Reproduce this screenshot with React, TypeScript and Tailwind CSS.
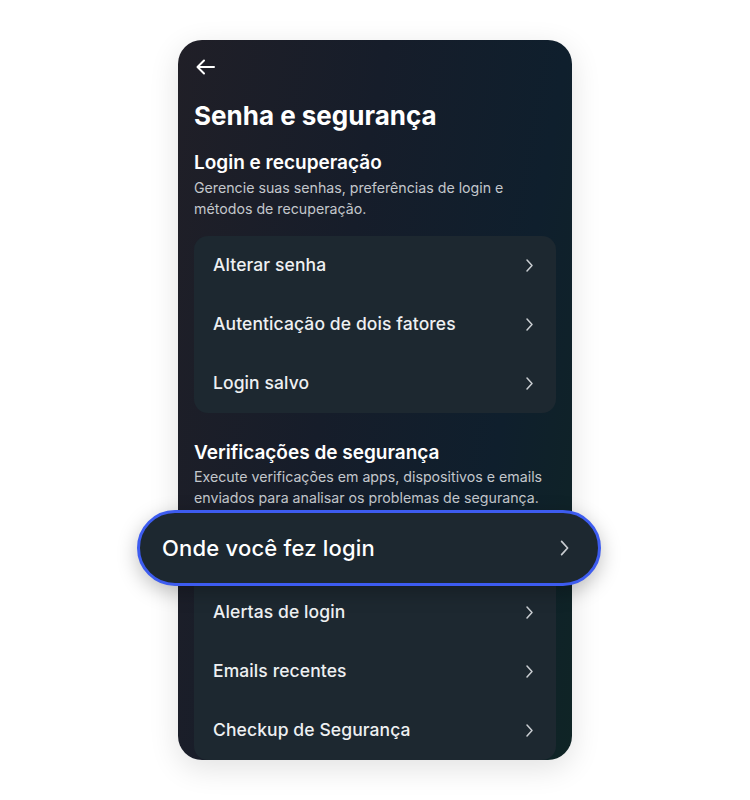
import React from "react";

const Chevron = ({ big = false }: { big?: boolean }) => (
  <svg
    width={big ? 12 : 10}
    height={big ? 18 : 15}
    viewBox="0 0 10 15"
    fill="none"
    stroke="#c9cdd1"
    strokeWidth={big ? 1.4 : 1.5}
    strokeLinecap="round"
    strokeLinejoin="round"
  >
    <path d="M3 2 L8 7.5 L3 13" />
  </svg>
);

const Row = ({ label }: { label: string }) => (
  <div className="flex h-[59px] items-center justify-between pl-[19px] pr-[22px]">
    <span className="text-[17.5px] font-medium tracking-[0.1px] text-[#eef0f2]">{label}</span>
    <Chevron />
  </div>
);

export default function App() {
  return (
    <div
      className="flex min-h-[800px] w-full justify-center bg-white pt-[40px]"
      style={{ fontFamily: "Inter, 'Noto Sans', sans-serif" }}
    >
      <div className="relative h-[720px] w-[394px] rounded-[24px] bg-[linear-gradient(100deg,#201f27_0%,#161d2a_40%,#0f1f2d_75%,#0f2425_100%)] px-4 shadow-[0_8px_30px_rgba(0,0,0,0.12)]">
        <div className="pt-[18px]">
          <svg width="22" height="18" viewBox="0 0 22 18" fill="none" stroke="#ffffff" strokeWidth="2" strokeLinecap="round" strokeLinejoin="round" className="ml-[1px]">
            <path d="M19 9 H3 M9 2.5 L2.5 9 L9 15.5" />
          </svg>
        </div>
        <h1 className="mt-[23px] text-[26px] font-bold leading-[34px] text-white">Senha e segurança</h1>
        <h2 className="mt-[18px] text-[19px] font-semibold leading-[24px] text-white">Login e recuperação</h2>
        <p className="mt-[3px] text-[14.2px] leading-[20.5px] text-[#c3c7cc]">
          Gerencie suas senhas, preferências de login e métodos de recuperação.
        </p>
        <div className="mt-[17px] rounded-[14px] bg-[#1d2830]">
          <Row label="Alterar senha" />
          <Row label="Autenticação de dois fatores" />
          <Row label="Login salvo" />
        </div>
        <h2 className="mt-[28px] text-[19px] font-semibold leading-[24px] text-white">Verificações de segurança</h2>
        <p className="mt-[2px] text-[14.2px] leading-[20.5px] text-[#c3c7cc]">
          Execute verificações em apps, dispositivos e emails enviados para analisar os problemas de segurança.
        </p>
        <div className="mt-[17px] rounded-[14px] bg-[#1d2830]">
          <div className="relative z-10 -mb-[3px] -ml-[57px] -mr-[45px] -mt-[15px] flex h-[76px] items-center justify-between rounded-full border-[3px] border-[#3d5cf0] bg-[#1d2830] pl-[22px] pr-[28px] shadow-[0_6px_20px_rgba(0,0,0,0.25)]">
            <span className="text-[22px] font-medium tracking-[0.2px] text-white">Onde você fez login</span>
            <Chevron big />
          </div>
          <Row label="Alertas de login" />
          <Row label="Emails recentes" />
          <Row label="Checkup de Segurança" />
        </div>
      </div>
    </div>
  );
}
